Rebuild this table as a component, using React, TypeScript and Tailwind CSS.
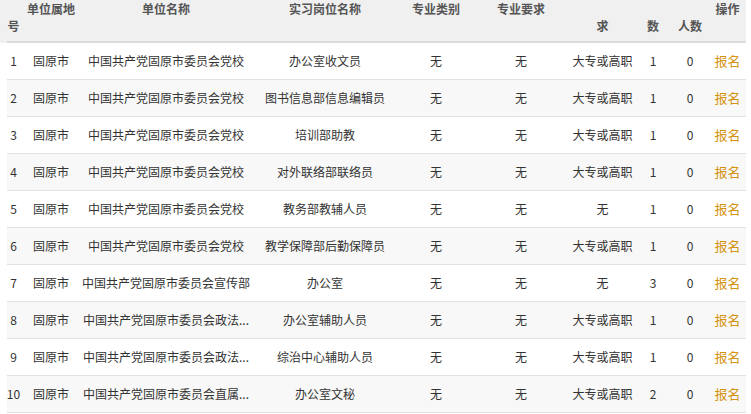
import React from "react";

const cols = "grid grid-cols-[13px_62px_168px_150px_72px_98px_65px_36px_38px_37px]";

const rows: [string, string, string, string, string, string, string, string, string][] = [
  ["1", "固原市", "中国共产党固原市委员会党校", "办公室收文员", "无", "无", "大专或高职", "1", "0"],
  ["2", "固原市", "中国共产党固原市委员会党校", "图书信息部信息编辑员", "无", "无", "大专或高职", "1", "0"],
  ["3", "固原市", "中国共产党固原市委员会党校", "培训部助教", "无", "无", "大专或高职", "1", "0"],
  ["4", "固原市", "中国共产党固原市委员会党校", "对外联络部联络员", "无", "无", "大专或高职", "1", "0"],
  ["5", "固原市", "中国共产党固原市委员会党校", "教务部教辅人员", "无", "无", "无", "1", "0"],
  ["6", "固原市", "中国共产党固原市委员会党校", "教学保障部后勤保障员", "无", "无", "大专或高职", "1", "0"],
  ["7", "固原市", "中国共产党固原市委员会宣传部", "办公室", "无", "无", "无", "3", "0"],
  ["8", "固原市", "中国共产党固原市委员会政法...", "办公室辅助人员", "无", "无", "大专或高职", "1", "0"],
  ["9", "固原市", "中国共产党固原市委员会政法...", "综治中心辅助人员", "无", "无", "大专或高职", "1", "0"],
  ["10", "固原市", "中国共产党固原市委员会直属...", "办公室文秘", "无", "无", "大专或高职", "2", "0"],
];

const header: [string, string][] = [
  ["", "号"],
  ["单位属地", ""],
  ["单位名称", ""],
  ["实习岗位名称", ""],
  ["专业类别", ""],
  ["专业要求", ""],
  ["", "求"],
  ["", "数"],
  ["", "人数"],
  ["操作", ""],
];

export default function App() {
  return (
    <div
      className="w-[751px] h-[414px] overflow-hidden bg-white text-[12px] text-[#333]"
      style={{ fontFamily: '"Noto Sans CJK SC", "Microsoft YaHei", sans-serif' }}
    >
      <div className="w-[746px] h-[43px] bg-[#f0f0f0] pl-[7px]">
        <div className={`${cols} h-[43px] border-b-2 border-[#dcdcdc]`}>
          {header.map((h, i) => (
            <div key={i} className="flex flex-col items-center font-bold text-[#555] whitespace-nowrap">
              <div className="h-[17px] leading-[17px]">{h[0]}</div>
              <div className="h-[17px] leading-[17px]">{h[1]}</div>
            </div>
          ))}
        </div>
      </div>
      <div className="ml-[7px] w-[739px]">
        {rows.map((r, i) => (
          <div
            key={i}
            className={`${cols} h-[37px] border-b border-[#e2e2e2] items-center ${i % 2 === 1 ? "bg-[#f8f8f8]" : "bg-white"}`}
          >
            {r.map((c, j) => (
              <div key={j} className="flex justify-center whitespace-nowrap">
                {c}
              </div>
            ))}
            <div className="flex justify-center whitespace-nowrap text-[13px] text-[#d4930f]">报名</div>
          </div>
        ))}
      </div>
    </div>
  );
}
